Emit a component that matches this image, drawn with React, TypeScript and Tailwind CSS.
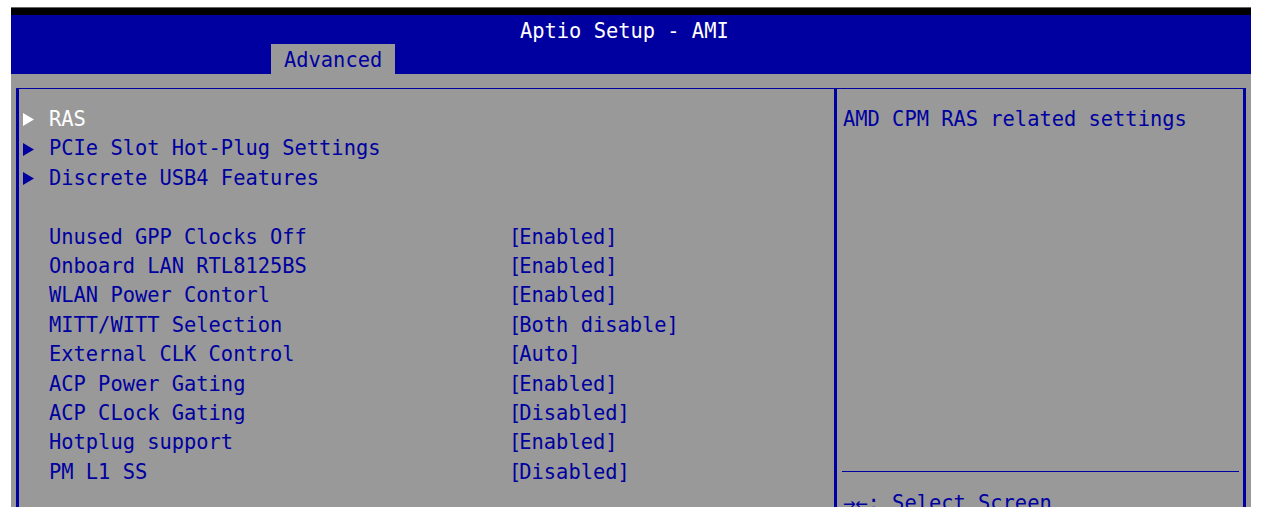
const menus = [
  { label: 'RAS', selected: true },
  { label: 'PCIe Slot Hot-Plug Settings', selected: false },
  { label: 'Discrete USB4 Features', selected: false },
];

const settings = [
  { label: 'Unused GPP Clocks Off', value: 'Enabled' },
  { label: 'Onboard LAN RTL8125BS', value: 'Enabled' },
  { label: 'WLAN Power Contorl', value: 'Enabled' },
  { label: 'MITT/WITT Selection', value: 'Both disable' },
  { label: 'External CLK Control', value: 'Auto' },
  { label: 'ACP Power Gating', value: 'Enabled' },
  { label: 'ACP CLock Gating', value: 'Disabled' },
  { label: 'Hotplug support', value: 'Enabled' },
  { label: 'PM L1 SS', value: 'Disabled' },
];

const Arrow = ({ white }: { white: boolean }) => (
  <svg width="11" height="13" viewBox="0 0 11 13" className="shrink-0">
    <polygon points="0,0 11,6.5 0,13" fill={white ? '#ffffff' : '#0000a0'} />
  </svg>
);

const App = () => {
  return (
    <div className="bg-white h-[517px] pt-[7px] pl-[11px] font-['DejaVu_Sans_Mono',monospace] text-[20.4px] leading-[29.4px] whitespace-pre">
      <div className="w-[1240px] h-[500px] bg-[#999999] overflow-hidden">
        {/* top bar */}
        <div className="h-[8px] bg-black border-t border-[#666]" />
        <div className="h-[59px] bg-[#0000a0]">
          <div className="h-[29px] flex items-center pt-[4px] pl-[509px] text-white">Aptio Setup - AMI</div>
          <div className="h-[30px] flex pl-[260px]">
            <div className="bg-[#999999] px-[13px] pt-[4px] flex items-center text-[#0000a0]">Advanced</div>
          </div>
        </div>

        <div className="flex mt-[14px] pl-[5px] h-[433px]">
          {/* left panel */}
          <div className="w-[821px] border-t border-t-[#0000a0] border-l-[3px] border-l-[#0000a0] border-r-[3px] border-r-[#0000a0] pt-[16px]">
            {menus.map((m) => (
              <div key={m.label} className="flex items-center h-[29.4px]">
                <div className="w-[30px] pl-[4px] flex items-center">
                  <Arrow white={m.selected} />
                </div>
                <span className={m.selected ? 'text-white' : 'text-[#0000a0]'}>{m.label}</span>
              </div>
            ))}
            <div className="h-[29.4px]" />
            {settings.map((s) => (
              <div key={s.label} className="flex h-[29.4px] pl-[30px] text-[#0000a0]">
                <span className="w-[460px]">{s.label}</span>
                <span>
                  <span className="tracking-[-2px]">[</span>
                  {s.value}]
                </span>
              </div>
            ))}
          </div>

          {/* right panel */}
          <div className="w-[409px] border-t border-t-[#0000a0] border-r-[3px] border-r-[#0000a0] text-[#0000a0]">
            <div className="h-[382px] pt-[16px] pl-[6px]">AMD CPM RAS related settings</div>
            <div className="ml-[5px] mr-[4px] border-t border-[#0000a0] pt-[17px] pl-px">
              <div className="h-[29.4px]">→←: Select Screen</div>
            </div>
          </div>
        </div>
      </div>
    </div>
  );
};

export default App;
